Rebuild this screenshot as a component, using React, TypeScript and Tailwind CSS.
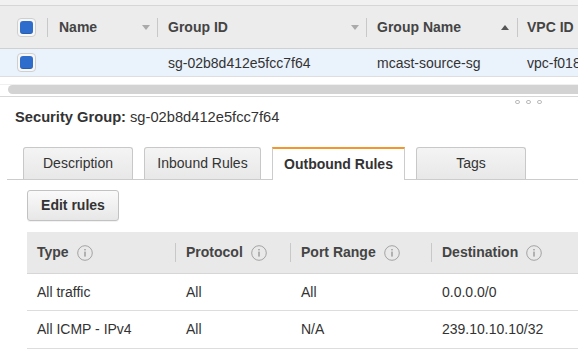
import React from "react";

const font = { fontFamily: '"Liberation Sans", Arial, sans-serif' };

function Checkbox() {
  return (
    <span className="flex h-[19px] w-[19px] items-center justify-center rounded-[4px] border border-[#cfcfcf] bg-[#f7f7f7]">
      <span className="h-[13px] w-[13px] rounded-[3px] bg-[#2f6dcc] shadow-[inset_0_-1px_0_rgba(0,0,0,0.15)]" />
    </span>
  );
}

function Sep({ h = "h-[19px]" }: { h?: string }) {
  return <span className={`w-px ${h} shrink-0 bg-[#c8c8c8]`} />;
}

function Arrow({ up = false }: { up?: boolean }) {
  return (
    <svg width="8" height="5" viewBox="0 0 8 5" className="shrink-0">
      {up ? (
        <path d="M0 5 L4 0 L8 5 Z" fill="#555" />
      ) : (
        <path d="M0 0 L8 0 L4 5 Z" fill="#aaa" />
      )}
    </svg>
  );
}

function Info() {
  return (
    <svg width="16" height="16" viewBox="0 0 16 16" className="ml-[8px] shrink-0">
      <circle cx="8" cy="8" r="7.3" fill="none" stroke="#a3a3a3" strokeWidth="1" />
      <rect x="7.4" y="6.6" width="1.2" height="5" fill="#8c8c8c" />
      <rect x="7.4" y="4" width="1.2" height="1.4" fill="#8c8c8c" />
    </svg>
  );
}

const tabs = [
  { label: "Description", w: "w-[110px]" },
  { label: "Inbound Rules", w: "w-[117px]" },
  { label: "Outbound Rules", w: "w-[133px]", active: true },
  { label: "Tags", w: "w-[110px]" },
];

const rules = [
  { type: "All traffic", proto: "All", port: "All", dest: "0.0.0.0/0" },
  { type: "All ICMP - IPv4", proto: "All", port: "N/A", dest: "239.10.10.10/32" },
];

export default function App() {
  return (
    <div className="h-[362px] w-[578px] overflow-hidden bg-white text-[14px] text-[#333]" style={font}>
      {/* list table */}
      <div className="h-[6px] border-b border-[#d6d6d6] bg-[#f1f1f1]" />
      <div className="flex h-[43px] items-center border-b border-[#d0d0d0] bg-[#ececec] font-bold text-[#444]">
        <div className="flex w-[47px] shrink-0 pl-[17px]">
          <Checkbox />
        </div>
        <Sep />
        <div className="flex w-[109px] shrink-0 items-center justify-between pl-[11px] pr-[7px]">
          Name <Arrow />
        </div>
        <Sep />
        <div className="flex w-[208px] shrink-0 items-center justify-between pl-[10px] pr-[7px]">
          Group ID <Arrow />
        </div>
        <Sep />
        <div className="flex w-[150px] shrink-0 items-center justify-between pl-[10px] pr-[8px]">
          Group Name <Arrow up />
        </div>
        <Sep />
        <div className="whitespace-nowrap pl-[9px]">VPC ID</div>
      </div>
      <div className="flex h-[28px] items-center border-b border-[#dedede] bg-[#eaf2fc]">
        <div className="flex w-[48px] shrink-0 pl-[17px]">
          <Checkbox />
        </div>
        <div className="w-[110px] shrink-0" />
        <div className="w-[209px] shrink-0 pl-[10px] pt-px">sg-02b8d412e5fcc7f64</div>
        <div className="w-[151px] shrink-0 pl-[10px] pt-px">mcast-source-sg</div>
        <div className="whitespace-nowrap pl-[9px] pt-px">vpc-f018</div>
      </div>
      <div className="h-[8px] border-b border-[#f0f0f0]" />
      <div className="ml-[8px] h-[9px] rounded-l-full bg-[#d3d3d3]" />
      <div className="h-[3px] border-b border-[#d8d8d8]" />

      {/* detail pane */}
      <div className="relative">
        <div className="absolute right-[36px] top-[3px] flex gap-[6px]">
          <span className="h-[4px] w-[5px] rounded-full border border-[#bbb]" />
          <span className="h-[4px] w-[5px] rounded-full border border-[#bbb]" />
          <span className="h-[4px] w-[5px] rounded-full border border-[#bbb]" />
        </div>
        <div className="flex h-[41px] items-center pl-[15px] text-[14.7px] text-[#333]">
          <span className="font-bold">Security Group:</span>
          <span className="ml-[4px]">sg-02b8d412e5fcc7f64</span>
        </div>

        <div className="ml-[7px] mt-[9px] flex items-end gap-[11px] border-b border-[#cccccc] pl-[16px]">
          {tabs.map((t) =>
            t.active ? (
              <div
                key={t.label}
                className={`${t.w} -mb-px flex h-[33px] items-center justify-center border-x border-t-2 border-x-[#cccccc] border-t-[#f5962a] bg-white font-bold text-[#333]`}
              >
                {t.label}
              </div>
            ) : (
              <div
                key={t.label}
                className={`${t.w} flex h-[32px] items-center justify-center rounded-t-[3px] border-x border-t border-[#c8c8c8] bg-gradient-to-b from-[#f4f4f4] to-[#e8e8e8] text-[#333]`}
              >
                {t.label}
              </div>
            )
          )}
        </div>

        <div className="ml-[27px] mt-[10px] flex h-[31px] w-[92px] items-center justify-center rounded-[3px] border border-[#c2c2c2] bg-gradient-to-b from-[#fafafa] to-[#e7e7e7] font-bold text-[#333] shadow-[0_1px_0_rgba(0,0,0,0.05)]">
          Edit rules
        </div>

        <div className="ml-[27px] mt-[11px]">
          <div className="flex h-[42px] items-center border-b border-[#d6d6d6] bg-[#e9e9e9] font-bold text-[#444]">
            <div className="flex w-[148px] shrink-0 items-center pl-[10px]">
              {"Type"}
              <Info />
            </div>
            <Sep />
            <div className="flex w-[114px] shrink-0 items-center pl-[10px]">
              {"Protocol"}
              <Info />
            </div>
            <Sep />
            <div className="flex w-[140px] shrink-0 items-center pl-[10px]">
              {"Port Range"}
              <Info />
            </div>
            <Sep />
            <div className="flex items-center whitespace-nowrap pl-[10px]">
              {"Destination"}
              <Info />
            </div>
          </div>
          {rules.map((r, i) => (
            <div
              key={r.type}
              className={`flex ${i === 0 ? "h-[37px]" : "h-[38px]"} items-center border-b border-[#dddddd]`}
            >
              <div className="w-[149px] shrink-0 pl-[10px]">{r.type}</div>
              <div className="w-[115px] shrink-0 pl-[10px]">{r.proto}</div>
              <div className="w-[141px] shrink-0 pl-[10px]">{r.port}</div>
              <div className="whitespace-nowrap pl-[10px]">{r.dest}</div>
            </div>
          ))}
        </div>
      </div>
    </div>
  );
}
